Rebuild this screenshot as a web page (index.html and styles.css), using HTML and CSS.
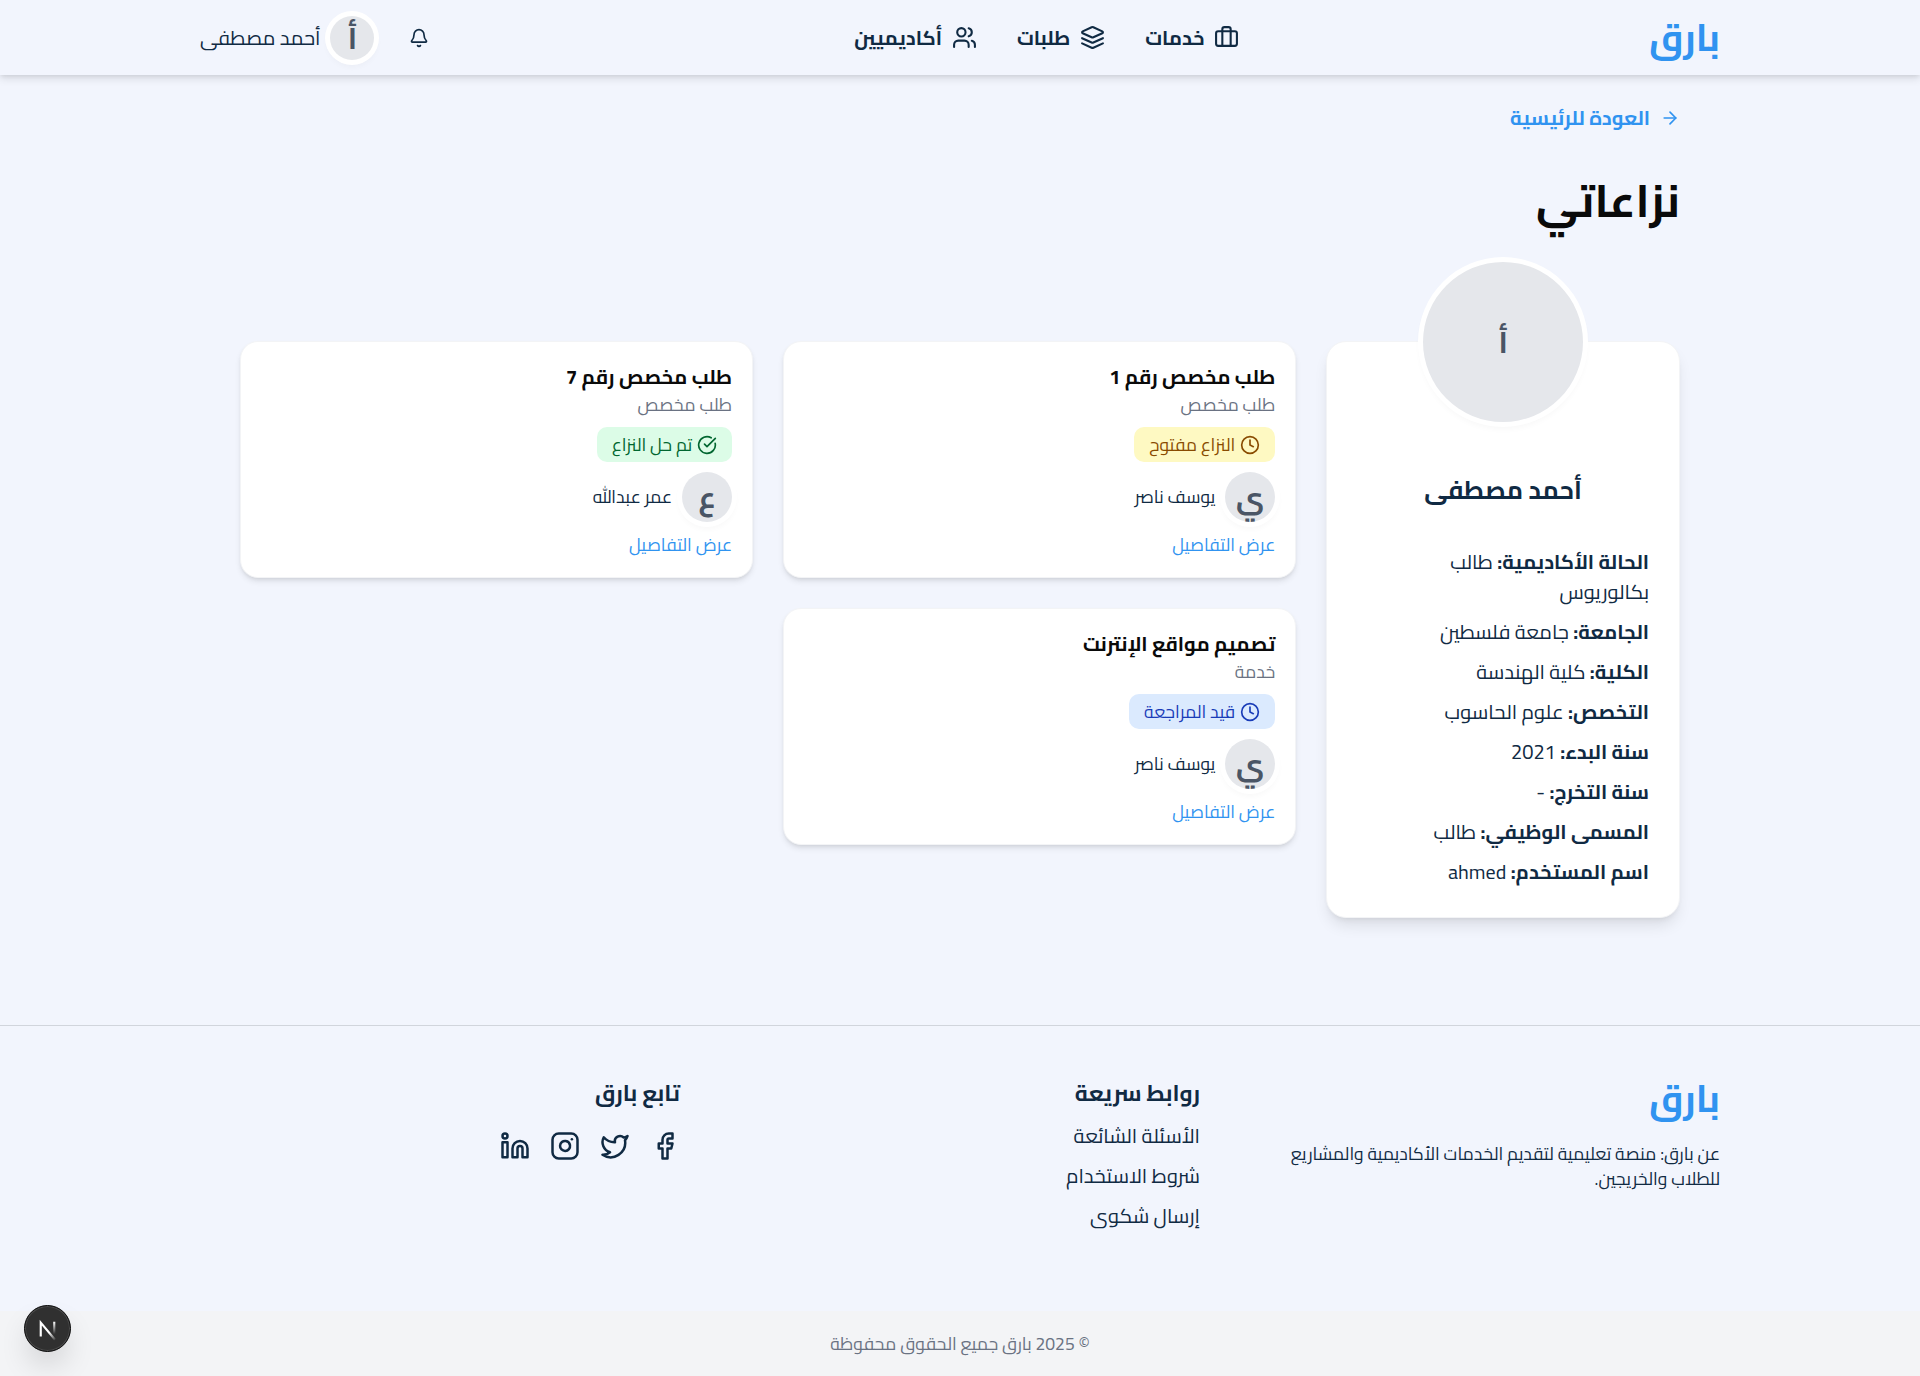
FILE: index.html
```html
<!DOCTYPE html>
<html lang="ar" dir="rtl">
<head>
<meta charset="utf-8">
<title>نزاعاتي</title>
<link rel="stylesheet" href="styles.css">
</head>
<body>
<svg class="sprite" aria-hidden="true">
  <symbol id="briefcase" viewBox="0 0 24 24"><rect x="2" y="6" width="20" height="14" rx="2"/><path d="M8 20V4a2 2 0 0 1 2-2h4a2 2 0 0 1 2 2v16"/></symbol>
  <symbol id="layers" viewBox="0 0 24 24"><path d="m12.83 2.18a2 2 0 0 0-1.66 0L2.6 6.08a1 1 0 0 0 0 1.83l8.58 3.91a2 2 0 0 0 1.66 0l8.58-3.9a1 1 0 0 0 0-1.83Z"/><path d="m22 17.65-9.17 4.16a2 2 0 0 1-1.66 0L2 17.65"/><path d="m22 12.65-9.17 4.16a2 2 0 0 1-1.66 0L2 12.65"/></symbol>
  <symbol id="users" viewBox="0 0 24 24"><path d="M16 21v-2a4 4 0 0 0-4-4H6a4 4 0 0 0-4 4v2"/><circle cx="9" cy="7" r="4"/><path d="M22 21v-2a4 4 0 0 0-3-3.87"/><path d="M16 3.13a4 4 0 0 1 0 7.75"/></symbol>
  <symbol id="bell" viewBox="0 0 24 24"><path d="M10.268 21a2 2 0 0 0 3.464 0"/><path d="M3.262 15.326A1 1 0 0 0 4 17h16a1 1 0 0 0 .74-1.673C19.41 13.956 18 12.499 18 8A6 6 0 0 0 6 8c0 4.499-1.411 5.956-2.738 7.326"/></symbol>
  <symbol id="arrow" viewBox="0 0 24 24"><path d="M5 12h14"/><path d="m12 5 7 7-7 7"/></symbol>
  <symbol id="clock" viewBox="0 0 24 24"><circle cx="12" cy="12" r="10"/><path d="M12 6v6l4 2"/></symbol>
  <symbol id="check" viewBox="0 0 24 24"><path d="M21.801 10A10 10 0 1 1 17 3.335"/><path d="m9 11 3 3L22 4"/></symbol>
  <symbol id="facebook" viewBox="0 0 24 24"><path d="M18 2h-3a5 5 0 0 0-5 5v3H7v4h3v8h4v-8h3l1-4h-4V7a1 1 0 0 1 1-1h3z"/></symbol>
  <symbol id="twitter" viewBox="0 0 24 24"><path d="M22 4s-.7 2.1-2 3.4c1.6 10-9.4 17.3-18 11.6 2.2.1 4.4-.6 6-2C3 15.5.5 9.6 3 5c2.2 2.6 5.6 4.1 9 4-.9-4.2 4-6.6 7-3.8 1.1 0 3-1.2 3-1.2z"/></symbol>
  <symbol id="instagram" viewBox="0 0 24 24"><rect x="2" y="2" width="20" height="20" rx="5"/><path d="M16 11.37A4 4 0 1 1 12.63 8 4 4 0 0 1 16 11.37z"/><path d="M17.5 6.5h.01"/></symbol>
  <symbol id="linkedin" viewBox="0 0 24 24"><path d="M16 8a6 6 0 0 1 6 6v7h-4v-7a2 2 0 0 0-4 0v7h-4v-7a6 6 0 0 1 6-6z"/><rect x="2" y="9" width="4" height="12"/><circle cx="4" cy="4" r="2"/></symbol>
</svg>

<header class="topbar">
  <div class="container topbar-row">
    <a class="logo">بارق</a>
    <nav class="nav">
      <a><svg class="icon-25"><use href="#briefcase"/></svg>خدمات</a>
      <a><svg class="icon-25"><use href="#layers"/></svg>طلبات</a>
      <a><svg class="icon-25"><use href="#users"/></svg>أكاديميين</a>
    </nav>
    <div class="account">
      <svg class="icon-20"><use href="#bell"/></svg>
      <div class="user"><span class="avatar avatar-top">أ</span><span>أحمد مصطفى</span></div>
    </div>
  </div>
</header>

<main class="page">
  <a class="back"><svg class="icon-20"><use href="#arrow"/></svg>العودة للرئيسية</a>
  <h1>نزاعاتي</h1>
  <div class="columns">
    <aside class="profile">
      <span class="avatar avatar-big">أ</span>
      <h2>أحمد مصطفى</h2>
      <ul>
        <li><b>الحالة الأكاديمية:</b> طالب بكالوريوس</li>
        <li><b>الجامعة:</b> جامعة فلسطين</li>
        <li><b>الكلية:</b> كلية الهندسة</li>
        <li><b>التخصص:</b> علوم الحاسوب</li>
        <li><b>سنة البدء:</b> 2021</li>
        <li><b>سنة التخرج:</b> -</li>
        <li><b>المسمى الوظيفي:</b> طالب</li>
        <li><b>اسم المستخدم:</b> ahmed</li>
      </ul>
    </aside>
    <section class="cards">
      <article class="card">
        <h3>طلب مخصص رقم 1</h3>
        <p class="kind">طلب مخصص</p>
        <span class="badge open"><svg class="icon-20"><use href="#clock"/></svg>النزاع مفتوح</span>
        <div class="person"><span class="avatar avatar-card">ي</span><span class="person-name">يوسف ناصر</span></div>
        <a class="more">عرض التفاصيل</a>
      </article>
      <article class="card">
        <h3>طلب مخصص رقم 7</h3>
        <p class="kind">طلب مخصص</p>
        <span class="badge solved"><svg class="icon-20"><use href="#check"/></svg>تم حل النزاع</span>
        <div class="person"><span class="avatar avatar-card">ع</span><span class="person-name">عمر عبدالله</span></div>
        <a class="more">عرض التفاصيل</a>
      </article>
      <article class="card">
        <h3>تصميم مواقع الإنترنت</h3>
        <p class="kind">خدمة</p>
        <span class="badge review"><svg class="icon-20"><use href="#clock"/></svg>قيد المراجعة</span>
        <div class="person"><span class="avatar avatar-card">ي</span><span class="person-name">يوسف ناصر</span></div>
        <a class="more">عرض التفاصيل</a>
      </article>
    </section>
  </div>
</main>

<footer class="footer">
  <div class="container footer-grid">
    <div>
      <a class="logo">بارق</a>
      <p class="about">عن بارق: منصة تعليمية لتقديم الخدمات الأكاديمية والمشاريع للطلاب والخريجين.</p>
    </div>
    <div>
      <h4>روابط سريعة</h4>
      <ul class="links">
        <li>الأسئلة الشائعة</li>
        <li>شروط الاستخدام</li>
        <li>إرسال شكوى</li>
      </ul>
    </div>
    <div>
      <h4>تابع بارق</h4>
      <div class="social">
        <svg><use href="#facebook"/></svg>
        <svg><use href="#twitter"/></svg>
        <svg><use href="#instagram"/></svg>
        <svg><use href="#linkedin"/></svg>
      </div>
    </div>
  </div>
  <div class="copyright">© 2025 بارق جميع الحقوق محفوظة</div>
</footer>

<div class="dev-badge">
  <svg viewBox="0 0 40 40">
    <defs>
      <linearGradient id="fade-b" gradientUnits="userSpaceOnUse" x1="0" y1="14" x2="0" y2="25"><stop offset="0" stop-color="#fff"/><stop offset="1" stop-color="#fff" stop-opacity="0"/></linearGradient>
      <linearGradient id="fade-c" gradientUnits="userSpaceOnUse" x1="20" y1="20" x2="28" y2="30"><stop offset="0.3" stop-color="#fff"/><stop offset="1" stop-color="#fff" stop-opacity="0"/></linearGradient>
    </defs>
    <path d="M14 27V14.800L26.700 30" fill="none" stroke="url(#fade-c)" stroke-width="1.900"/>
    <path d="M26 14v11" fill="none" stroke="url(#fade-b)" stroke-width="1.900"/>
  </svg>
</div>
</body>
</html>
```

FILE: styles.css
```css
*{box-sizing:border-box;margin:0;padding:0}
html{font-size:20px}
body{
  min-height:1376px;
  display:flex;
  flex-direction:column;
  background:#f2f5fd;
  color:#0a0a0a;
  font-family:"Cairo","Noto Sans Arabic","Noto Sans",sans-serif;
  font-size:20px;
  line-height:30px;
}
ul{list-style:none}
svg{fill:none;stroke:currentColor;stroke-width:2;stroke-linecap:round;stroke-linejoin:round;flex:none}
.sprite{display:none}
.icon-20{width:20px;height:20px}
.icon-25{width:25px;height:25px}
.container{width:1520px;margin:0 auto}

.topbar{
  height:75px;
  color:#102a43;
  box-shadow:0 4px 8px rgba(0,0,0,.1),0 2px 4px -1px rgba(0,0,0,.08);
}
.topbar-row{display:flex;justify-content:space-between;align-items:center;height:75px}
.logo{display:block;color:#3093f0;font-size:37.5px;font-weight:700;line-height:45px}
.topbar .logo{padding-left:5px}
.nav{display:flex;gap:40px;font-weight:700}
.nav a{display:flex;align-items:center;gap:10px}
.account{display:flex;align-items:center;gap:30px;padding-right:20px}
.user{display:flex;align-items:center;gap:5px}

.avatar{
  display:flex;
  align-items:center;
  justify-content:center;
  border-radius:50%;
  background:#e5e7eb;
  color:#4a5565;
  font-size:30px;
  font-weight:700;
  box-shadow:0 0 0 5px #fff,0 4px 6px 3px rgba(0,0,0,.03);
}
.avatar-top{width:44px;height:44px;margin:0 5px}
.avatar-card{width:50px;height:50px;overflow:hidden}
.avatar-big{width:160px;height:160px;margin:-80px auto 0}

.page{width:1440px;margin:0 auto;flex:1;padding-top:28px}
.back{display:flex;align-items:center;gap:10px;color:#3093f0;font-weight:700}
h1{margin-top:43px;font-size:45px;line-height:50px;font-weight:700}
.columns{display:grid;grid-template-columns:353.75px 1fr;gap:30px;align-items:start;margin-top:115px}
.profile{
  height:577px;
  padding:0 30px;
  border:1px solid #f3f4f6;
  border-radius:20px;
  background:#fff;
  color:#102a43;
  box-shadow:0 10px 15px -3px rgba(0,0,0,.1),0 4px 6px -4px rgba(0,0,0,.1);
}
.profile h2{margin-top:50px;text-align:center;font-size:25px;line-height:35px;font-weight:700}
.profile ul{display:grid;gap:10px;margin-top:40px}
.profile li{padding-left:40px}
.cards{display:grid;grid-template-columns:1fr 1fr;gap:30px}
.card{
  display:flex;
  flex-direction:column;
  align-items:flex-start;
  height:237px;
  padding:20px;
  border:1px solid #f3f4f6;
  border-radius:18px;
  background:#fff;
  box-shadow:0 4px 6px -1px rgba(0,0,0,.1),0 2px 4px -2px rgba(0,0,0,.1);
}
.card h3{font-size:20px;line-height:30px;font-weight:700}
.kind{color:#6a7282;font-size:17.5px;line-height:25px}
.badge{display:flex;align-items:center;gap:5px;height:35px;margin-top:10px;padding:0 15px;border-radius:10px;font-size:17.5px;line-height:25px}
.open{background:#fef9c2;color:#894b00}
.solved{background:#dcfce7;color:#016630}
.review{background:#dbeafe;color:#193cb8}
.person{display:flex;align-items:center;gap:10px;margin-top:10px;color:#102a43;font-size:17.5px;line-height:25px}
.person-name{padding-bottom:2px}
.more{margin-top:10px;color:#3093f0;font-size:17.5px;line-height:25px}

.footer{border-top:1px solid #d1d5dc;color:#102a43}
.footer-grid{display:grid;grid-template-columns:repeat(3,1fr);gap:40px;height:285px;padding-top:50px}
.about{margin-top:20px;font-size:17.5px;line-height:25px}
h4{font-size:22.5px;line-height:35px;font-weight:700}
.links{display:grid;gap:10px;margin-top:10px}
.social{display:flex;gap:20px;margin-top:20px}
.social svg{width:30px;height:30px}
.copyright{height:65px;padding-top:20px;background:#f3f4f6;color:#6a7282;text-align:center;font-size:17.5px;line-height:25px}

.dev-badge{
  position:fixed;
  left:24px;
  bottom:24px;
  width:47px;
  height:47px;
  border-radius:50%;
  border:1px solid #0a0a0a;
  background:#303030;
  box-shadow:inset 0 0 0 1px #4a4a4a,0 16px 32px -8px rgba(0,0,0,.24);
}
.dev-badge svg{display:block;width:45px;height:45px;stroke-linecap:butt;stroke-linejoin:miter}
```
